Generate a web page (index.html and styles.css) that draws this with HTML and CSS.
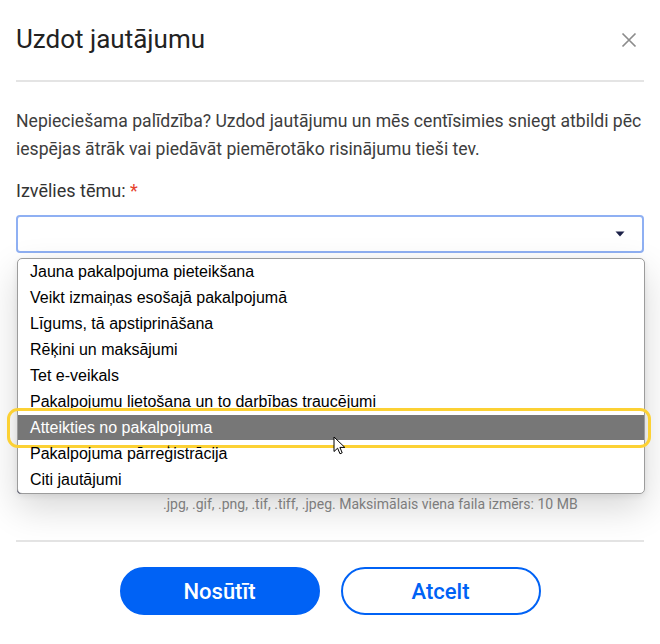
FILE: index.html
```html
<!DOCTYPE html>
<html lang="lv">
<head>
<meta charset="utf-8">
<title>Uzdot jautājumu</title>
<link rel="stylesheet" href="styles.css">
</head>
<body>
<div class="dialog">
  <header class="dialog-header">
    <h1 class="dialog-title">Uzdot jautājumu</h1>
    <button class="close-btn" aria-label="Aizvērt">
      <svg width="16" height="16" viewBox="0 0 16 16"><path d="M1.5 1.5 L14.5 14.5 M14.5 1.5 L1.5 14.5" stroke="#8c8c8c" stroke-width="1.7" fill="none"/></svg>
    </button>
  </header>

  <div class="dialog-body">
    <p class="intro">Nepieciešama palīdzība? Uzdod jautājumu un mēs centīsimies sniegt atbildi pēc iespējas ātrāk vai piedāvāt piemērotāko risinājumu tieši tev.</p>

    <label class="field-label">Izvēlies tēmu: <span class="req">*</span></label>
    <div class="select-wrap">
      <div class="select-box">
        <svg class="select-arrow" width="10" height="6" viewBox="0 0 10 6"><path d="M0.5 0.5 H9.5 L5 5.5 Z" fill="#1c2148"/></svg>
      </div>
      <ul class="dropdown">
        <li class="option">Jauna pakalpojuma pieteikšana</li>
        <li class="option">Veikt izmaiņas esošajā pakalpojumā</li>
        <li class="option">Līgums, tā apstiprināšana</li>
        <li class="option">Rēķini un maksājumi</li>
        <li class="option">Tet e-veikals</li>
        <li class="option">Pakalpojumu lietošana un to darbības traucējumi</li>
        <li class="option option-hover">Atteikties no pakalpojuma
          <span class="focus-ring"></span>
          <svg class="cursor" width="14" height="20" viewBox="0 0 14 20"><path d="M1 1 L1 15.5 L4.6 12.2 L7 17.8 L9.2 16.8 L6.9 11.4 L11.8 11.4 Z" fill="#fff" stroke="#000" stroke-width="1" stroke-linejoin="round"/></svg>
        </li>
        <li class="option">Pakalpojuma pārreģistrācija</li>
        <li class="option">Citi jautājumi</li>
      </ul>
    </div>

    <div class="attach-area">
      <div class="file-btn"></div>
    </div>
    <p class="hint">.jpg, .gif, .png, .tif, .tiff, .jpeg. Maksimālais viena faila izmērs: 10 MB</p>
  </div>

  <footer class="dialog-footer">
    <button class="btn btn-primary">Nosūtīt</button>
    <button class="btn btn-outline">Atcelt</button>
  </footer>
</div>
</body>
</html>
```

FILE: styles.css
```css
* { box-sizing: border-box; }

html, body {
  margin: 0;
  padding: 0;
  background: #ffffff;
}

body {
  font-family: Roboto, "Liberation Sans", Arial, sans-serif;
  color: #222;
}

.dialog {
  width: 660px;
  padding: 0 16px;
}

.dialog-header {
  height: 82px;
  display: flex;
  align-items: flex-start;
  justify-content: space-between;
  border-bottom: 2px solid #e4e4e4;
  padding-top: 22px;
}

.dialog-title {
  margin: 0;
  font-size: 26px;
  line-height: 34px;
  font-weight: 400;
  color: #222;
}

.close-btn {
  border: 0;
  background: none;
  padding: 0;
  margin: 10px 7px 0 0;
  width: 16px;
  height: 16px;
  display: block;
}
.close-btn svg { display: block; }

.dialog-body {
  padding-top: 25px;
}

.intro {
  margin: 0;
  font-size: 17.6px;
  line-height: 28px;
  color: #3d3d3d;
}

.field-label {
  display: block;
  margin-top: 14px;
  font-size: 18px;
  line-height: 28px;
  color: #333;
}
.req { color: #e5412d; }

.select-wrap {
  position: relative;
  margin-top: 10px;
}

.select-box {
  height: 38px;
  border: 2px solid #8fb0f3;
  border-radius: 4px;
  display: flex;
  align-items: center;
  justify-content: flex-end;
  padding-right: 17px;
}
.select-arrow { display: block; }

.dropdown {
  position: absolute;
  top: 43px;
  left: 1px;
  right: -1px;
  margin: 0;
  padding: 0;
  list-style: none;
  background: #fff;
  border: 1px solid #9c9c9c;
  border-radius: 5px;
  box-shadow: 0 14px 36px rgba(0,0,0,0.16), 0 2px 6px rgba(0,0,0,0.08);
  z-index: 5;
  font-family: "Liberation Sans", Arial, sans-serif;
}

.option {
  position: relative;
  height: 26px;
  line-height: 26px;
  padding-left: 12px;
  font-size: 16px;
  color: #000;
  white-space: nowrap;
}

.option-hover {
  background: #777777;
  color: #fff;
  height: 25px;
  line-height: 25px;
  margin-bottom: 1px;
}

.focus-ring {
  position: absolute;
  left: -11px;
  right: -7px;
  top: -7px;
  bottom: -8px;
  border: 3px solid #fcd134;
  border-radius: 11px;
  pointer-events: none;
}

.cursor {
  position: absolute;
  left: 315px;
  top: 21px;
}

.attach-area {
  height: 241px;
  display: flex;
  align-items: flex-end;
  padding-left: 1px;
}

.file-btn {
  width: 108px;
  height: 36px;
  border: 1px solid #1c2148;
  border-radius: 4px;
}

.hint {
  margin: 1px 0 0 0;
  padding-left: 147px;
  font-size: 14px;
  line-height: 18px;
  color: #8a8a8a;
}

.dialog-footer {
  margin-top: 27px;
  border-top: 2px solid #e4e4e4;
  padding-top: 25px;
  display: flex;
  justify-content: center;
  gap: 21px;
}

.btn {
  width: 200px;
  height: 48px;
  border-radius: 24px;
  font-family: Roboto, "Liberation Sans", Arial, sans-serif;
  font-size: 22px;
  font-weight: 500;
  cursor: pointer;
}

.btn-primary {
  background: #0062f5;
  border: 2px solid #0062f5;
  color: #fff;
}

.btn-outline {
  background: #fff;
  border: 2px solid #0062f5;
  color: #0062f5;
}
```
